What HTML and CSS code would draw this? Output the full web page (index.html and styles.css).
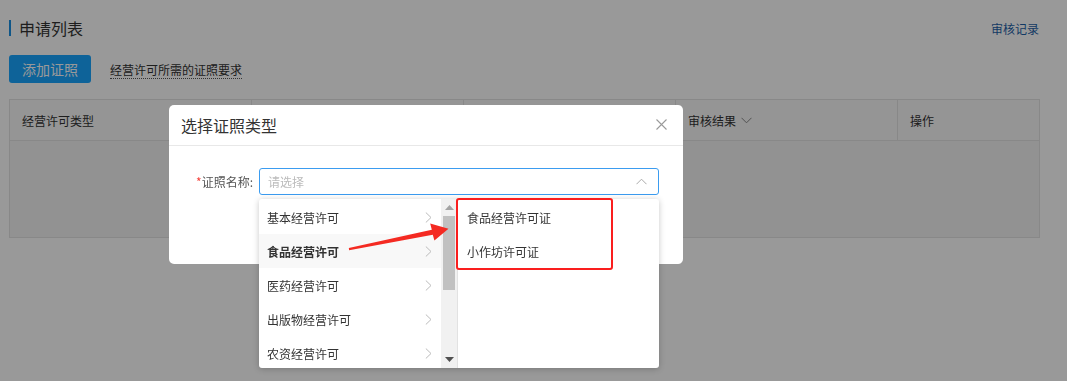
FILE: index.html
```html
<!DOCTYPE html>
<html lang="zh-CN">
<head>
<meta charset="utf-8">
<title>申请列表</title>
<link rel="stylesheet" href="styles.css">
</head>
<body>
<div class="page">
  <div class="page-head">
    <h2 class="page-title">申请列表</h2>
    <a class="head-link">审核记录</a>
  </div>
  <div class="toolbar">
    <button class="btn-primary">添加证照</button>
    <a class="dotted-link">经营许可所需的证照要求</a>
  </div>
  <div class="table">
    <div class="thead">
      <div class="th c1">经营许可类型</div>
      <div class="th c2"></div>
      <div class="th c3"></div>
      <div class="th c4">审核结果 <svg class="th-caret" width="11" height="7" viewBox="0 0 11 7"><polyline points="0.5,0.8 5.5,5.8 10.5,0.8" fill="none" stroke="#888" stroke-width="1"/></svg></div>
      <div class="th c5">操作</div>
    </div>
    <div class="tbody"></div>
  </div>
</div>

<div class="mask"></div>

<div class="modal">
  <div class="modal-head">
    <span class="modal-title">选择证照类型</span>
    <svg class="modal-close" width="11" height="11" viewBox="0 0 11 11"><path d="M0.5 0.5 L10.5 10.5 M10.5 0.5 L0.5 10.5" stroke="#9a9a9a" stroke-width="1.1" fill="none"/></svg>
  </div>
  <div class="modal-body">
    <div class="form-row">
      <label class="form-label"><span class="req">*</span>证照名称:</label>
      <div class="select">
        <div class="select-input">
          <span class="placeholder">请选择</span>
          <svg class="select-arrow" width="11" height="7" viewBox="0 0 11 7"><polyline points="0.5,6.2 5.5,1.2 10.5,6.2" fill="none" stroke="#aaa" stroke-width="1"/></svg>
        </div>
        <div class="dropdown">
          <div class="panel panel-left">
            <ul class="menu">
              <li class="menu-item">基本经营许可<svg class="chev" width="7" height="11" viewBox="0 0 7 11"><polyline points="0.8,0.5 6,5.5 0.8,10.5" fill="none" stroke="#bbb" stroke-width="1"/></svg></li>
              <li class="menu-item active">食品经营许可<svg class="chev" width="7" height="11" viewBox="0 0 7 11"><polyline points="0.8,0.5 6,5.5 0.8,10.5" fill="none" stroke="#bbb" stroke-width="1"/></svg></li>
              <li class="menu-item">医药经营许可<svg class="chev" width="7" height="11" viewBox="0 0 7 11"><polyline points="0.8,0.5 6,5.5 0.8,10.5" fill="none" stroke="#bbb" stroke-width="1"/></svg></li>
              <li class="menu-item">出版物经营许可<svg class="chev" width="7" height="11" viewBox="0 0 7 11"><polyline points="0.8,0.5 6,5.5 0.8,10.5" fill="none" stroke="#bbb" stroke-width="1"/></svg></li>
              <li class="menu-item">农资经营许可<svg class="chev" width="7" height="11" viewBox="0 0 7 11"><polyline points="0.8,0.5 6,5.5 0.8,10.5" fill="none" stroke="#bbb" stroke-width="1"/></svg></li>
            </ul>
            <div class="scrollbar">
              <svg class="sb-up" width="9" height="5" viewBox="0 0 9 5"><polygon points="0,5 4.5,0 9,5" fill="#a3a3a3"/></svg>
              <div class="sb-thumb"></div>
              <svg class="sb-down" width="9" height="5" viewBox="0 0 9 5"><polygon points="0,0 4.5,5 9,0" fill="#505050"/></svg>
            </div>
          </div>
          <div class="panel panel-right">
            <ul class="menu">
              <li class="menu-item">食品经营许可证</li>
              <li class="menu-item">小作坊许可证</li>
            </ul>
          </div>
        </div>
      </div>
    </div>
  </div>
</div>

<div class="mark-box"></div>
<svg class="mark-arrow" width="1067" height="381" viewBox="0 0 1067 381">
  <polygon points="348.8,248 431.8,229.8 430.2,223.6 448.5,228.8 434.4,240.6 432.8,234.7 349.2,250.2" fill="#f42a22"/>
</svg>
</body>
</html>
```

FILE: styles.css
```css
* { box-sizing: border-box; }
html, body { margin: 0; padding: 0; }
body {
  width: 1067px;
  height: 381px;
  overflow: hidden;
  background: #fff;
  font-family: "Noto Sans CJK SC", "Microsoft YaHei", sans-serif;
  color: #333;
  font-size: 12px;
}
ul { list-style: none; margin: 0; padding: 0; }

.page { padding: 18px 28px 0 9px; }

.page-head {
  display: flex;
  justify-content: space-between;
  align-items: center;
  height: 20px;
}
.page-title {
  margin: 0;
  font-size: 16px;
  font-weight: normal;
  line-height: 16px;
  border-left: 2px solid #1a8fe3;
  padding-left: 8px;
  color: #333;
}
.head-link {
  color: #1f5fa8;
  font-size: 12px;
}

.toolbar {
  display: flex;
  align-items: center;
  margin-top: 17px;
}
.btn-primary {
  width: 82px;
  height: 28px;
  border: none;
  border-radius: 3px;
  background: #18a5ff;
  color: #fff;
  font-family: inherit;
  font-size: 14px;
  padding: 0;
}
.dotted-link {
  margin-left: 19px;
  font-size: 12px;
  line-height: 16px;
  color: #333;
  border-bottom: 1px dotted #555;
  margin-top: 2px;
}

.table {
  margin-top: 16px;
  width: 1031px;
  border: 1px solid #e3e3e3;
  background: #f4f4f4;
}
.thead {
  display: flex;
  height: 41px;
  background: #f9f9f9;
  border-bottom: 1px solid #e3e3e3;
}
.th {
  display: flex;
  align-items: center;
  padding-left: 12px;
  font-size: 12px;
  color: #333;
  border-right: 1px solid #e3e3e3;
}
.th:last-child { border-right: none; }
.c1 { width: 242px; }
.c2 { width: 212px; }
.c3 { width: 212px; }
.c4 { width: 222px; }
.c5 { flex: 1; }
.th-caret { margin-left: 5px; }
.tbody { height: 96px; }

.mask {
  position: fixed;
  inset: 0;
  background: rgba(0, 0, 0, 0.4);
}

.modal {
  position: absolute;
  left: 169px;
  top: 105px;
  width: 514px;
  height: 159px;
  background: #fff;
  border-radius: 5px;
}
.modal-head {
  height: 41px;
  display: flex;
  align-items: center;
  justify-content: space-between;
  padding: 0 16px 0 12px;
  border-bottom: 1px solid #e8e8e8;
}
.modal-title { font-size: 16px; color: #333; }
.modal-close { margin-bottom: 1px; }

.modal-body { padding: 22px 0 0 0; }
.form-row { display: flex; align-items: center; }
.form-label {
  width: 86px;
  text-align: right;
  padding-right: 2px;
  font-size: 12px;
  color: #555;
  margin-right: 4px;
}
.req { color: #f5433c; }
.select { position: relative; width: 400px; }
.select-input {
  height: 27px;
  border: 1px solid #3b9cf0;
  border-radius: 3px;
  display: flex;
  align-items: center;
  justify-content: space-between;
  padding: 0 11px 0 8px;
}
.placeholder { color: #bbb; font-size: 12px; }

.dropdown {
  position: absolute;
  left: 0;
  top: 31px;
  width: 400px;
  height: 169px;
  background: #fff;
  border-radius: 3px;
  box-shadow: 0 1px 6px rgba(0, 0, 0, 0.22);
  display: flex;
  overflow: hidden;
}
.panel { height: 100%; }
.panel-left {
  width: 199px;
  display: flex;
  border-right: 1px solid #e2e2e2;
}
.panel-left .menu { width: 182px; padding-top: 1px; }
.panel-right { flex: 1; padding-top: 1px; }
.menu-item {
  height: 34px;
  display: flex;
  align-items: center;
  justify-content: space-between;
  padding: 0 9px 0 8px;
  font-size: 12px;
  color: #333;
}
.menu-item.active { background: #f8f8f8; font-weight: bold; }
.panel-right .menu-item { padding-left: 9px; }
.chev { flex: none; }

.scrollbar {
  width: 16px;
  background: #f1f1f1;
  display: flex;
  flex-direction: column;
  align-items: center;
  position: relative;
}
.sb-up { margin-top: 6px; }
.sb-thumb {
  width: 12px;
  height: 74px;
  background: #c1c1c1;
  margin-top: 6px;
}
.sb-down { margin-top: auto; margin-bottom: 6px; }

.mark-box {
  position: absolute;
  left: 456px;
  top: 198px;
  width: 157px;
  height: 72px;
  border: 2.5px solid #fa1e1e;
  border-radius: 3px;
}
.mark-arrow {
  position: absolute;
  left: 0;
  top: 0;
  pointer-events: none;
}
```
